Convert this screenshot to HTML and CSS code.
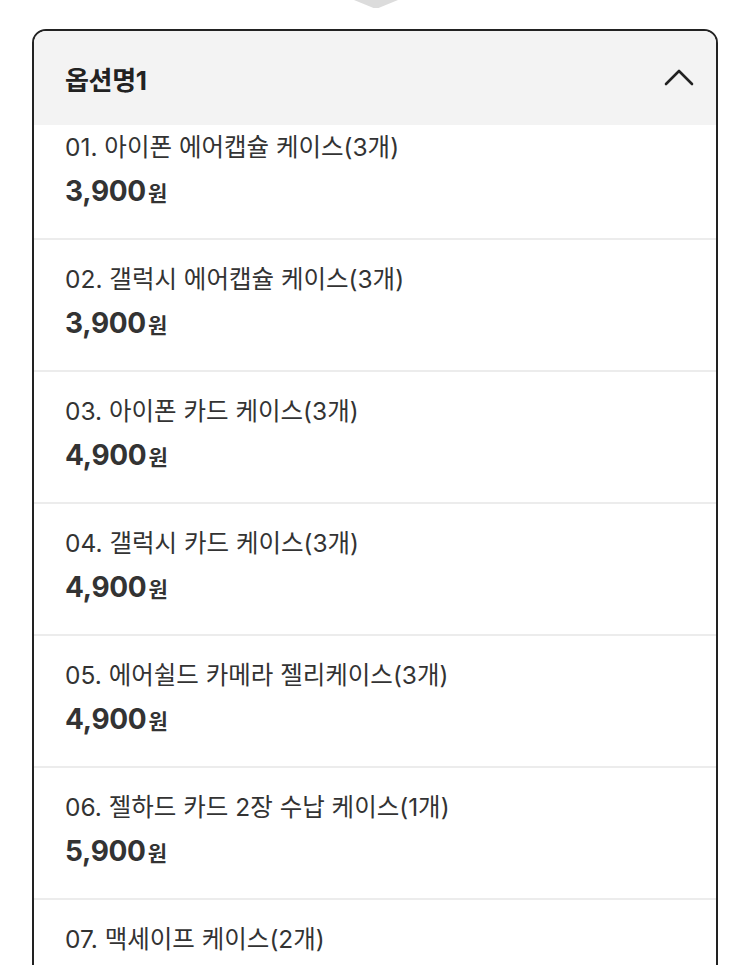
FILE: index.html
```html
<!DOCTYPE html>
<html lang="ko">
<head>
<meta charset="utf-8">
<link rel="stylesheet" href="styles.css">
</head>
<body>
<div class="pointer">
  <svg width="44" height="9" viewBox="0 0 44 9"><path d="M0 0 H44 L24.5 8 Q22 9 19.5 8 Z" fill="#dcdcdc"/></svg>
</div>
<div class="panel">
  <div class="panel-head">
    <span class="panel-title">옵션명1</span>
    <svg class="chevron" width="30" height="18" viewBox="0 0 30 18"><path d="M2 16 L15 3 L28 16" fill="none" stroke="#222" stroke-width="2.6" stroke-linecap="round" stroke-linejoin="round"/></svg>
  </div>
  <div class="list">
    <div class="item first">
      <div class="name">01. 아이폰 에어캡슐 케이스(3개)</div>
      <div class="price">3,900<span class="won">원</span></div>
    </div>
    <div class="item">
      <div class="name">02. 갤럭시 에어캡슐 케이스(3개)</div>
      <div class="price">3,900<span class="won">원</span></div>
    </div>
    <div class="item">
      <div class="name">03. 아이폰 카드 케이스(3개)</div>
      <div class="price">4,900<span class="won">원</span></div>
    </div>
    <div class="item">
      <div class="name">04. 갤럭시 카드 케이스(3개)</div>
      <div class="price">4,900<span class="won">원</span></div>
    </div>
    <div class="item">
      <div class="name">05. 에어쉴드 카메라 젤리케이스(3개)</div>
      <div class="price">4,900<span class="won">원</span></div>
    </div>
    <div class="item">
      <div class="name">06. 젤하드 카드 2장 수납 케이스(1개)</div>
      <div class="price">5,900<span class="won">원</span></div>
    </div>
    <div class="item">
      <div class="name">07. 맥세이프 케이스(2개)</div>
      <div class="price">5,900<span class="won">원</span></div>
    </div>
  </div>
</div>
</body>
</html>
```

FILE: styles.css
```css
html, body {
  margin: 0;
  padding: 0;
  background: #fff;
  height: 965px;
  overflow: hidden;
}
body {
  font-family: "Inter", "Noto Sans CJK KR", "Noto Sans", sans-serif;
  color: #333;
}
.pointer {
  display: flex;
  justify-content: center;
  height: 8px;
  overflow: hidden;
  padding-left: 1px;
}
.pointer svg {
  display: block;
}
.panel {
  margin: 21px 0 0 32px;
  width: 686px;
  box-sizing: border-box;
  height: 1100px;
  border: 2px solid #222;
  border-radius: 14px 14px 0 0;
  overflow: hidden;
}
.panel-head {
  height: 94px;
  background: #f3f3f3;
  display: flex;
  align-items: center;
  justify-content: space-between;
  padding: 0 22px 0 31px;
}
.panel-title {
  font-size: 26px;
  font-weight: 700;
  color: #222;
  letter-spacing: -0.3px;
}
.chevron {
  display: block;
  margin-bottom: 2px;
}
.list {
  overflow: hidden;
}
.item {
  height: 132px;
  box-sizing: border-box;
  padding: 24px 31px 0;
  border-bottom: 2px solid #ececec;
}
.item.first {
  margin-top: -17px;
}
.name {
  font-size: 24.5px;
  line-height: 30px;
  height: 30px;
  color: #333;
  margin-bottom: 11px;
  white-space: nowrap;
}
.price {
  font-size: 28px;
  line-height: 36px;
  height: 36px;
  font-weight: 700;
  color: #333;
  letter-spacing: -0.3px;
}
.won {
  font-size: 21px;
  line-height: 1;
  margin-left: 2px;
}
```
